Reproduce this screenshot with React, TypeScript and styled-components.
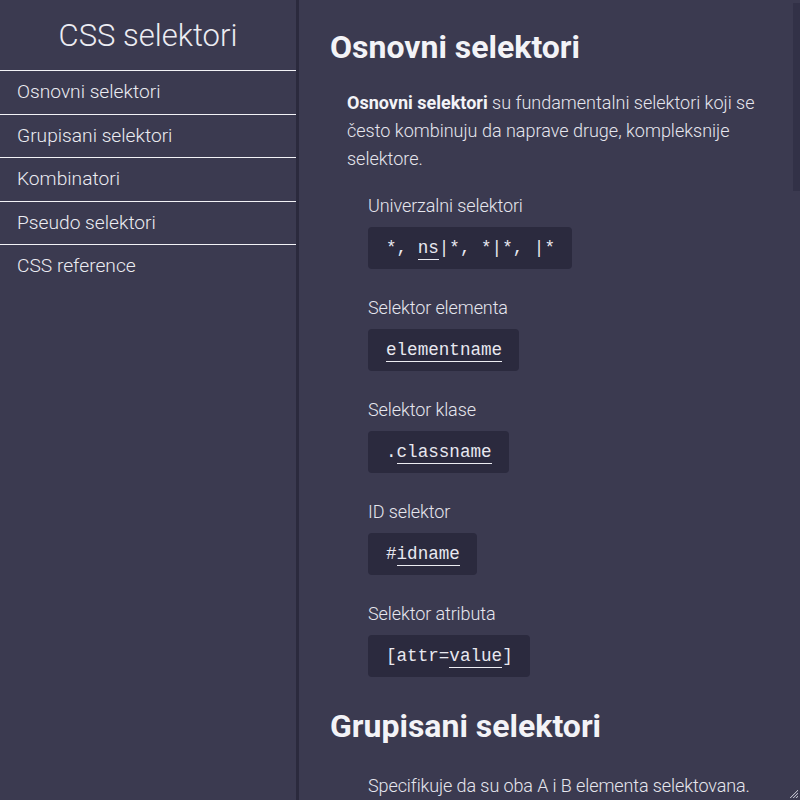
import React from "react";
import styled, { createGlobalStyle } from "styled-components";

const Global = createGlobalStyle`
  html, body { margin: 0; padding: 0; background: #3b3a50; }
  body { font-family: Roboto, "Liberation Sans", sans-serif; color: #e6e6ee; }
  * { box-sizing: border-box; }
`;

const Layout = styled.div`
  display: flex;
  height: 800px;
  width: 800px;
  background: #3b3a50;
`;

const Sidebar = styled.aside`
  width: 296px;
  flex: none;
  display: flex;
  flex-direction: column;
`;

const SiteTitle = styled.h1`
  margin: 0;
  padding: 17px 0 16px;
  text-align: center;
  font-weight: 300;
  font-size: 31px;
  line-height: 37px;
  color: #ececf2;
`;

const NavList = styled.nav`
  display: flex;
  flex-direction: column;
`;

const NavItem = styled.a`
  display: block;
  border-top: 1px solid #f2f2f6;
  height: 43.5px;
  padding: 8px 17px 0;
  font-size: 19.2px;
  font-weight: 300;
  line-height: 26px;
  color: #ececf2;
  text-decoration: none;
`;

const Pane = styled.div`
  position: relative;
  flex: 1;
  height: 800px;
  border-left: 3px solid #2b2a3d;
`;

const Main = styled.main`
  height: 100%;
  overflow-y: auto;
  padding: 0 0 0 31px;
  scrollbar-width: none;
  &::-webkit-scrollbar { display: none; }
`;

const ScrollThumb = styled.div`
  position: absolute;
  top: 3px;
  right: 0;
  width: 7px;
  height: 188px;
  background: #323147;
  pointer-events: none;
`;

const Grip = styled.svg`
  position: absolute;
  right: 1px;
  bottom: 1px;
  width: 12px;
  height: 12px;
  pointer-events: none;
`;

const Section = styled.section`
  padding-bottom: 2px;
`;

const Heading = styled.h2`
  margin: 0;
  padding-top: 27px;
  font-size: 32px;
  font-weight: 700;
  line-height: 40px;
  color: #f3f3f7;
`;

const Lead = styled.p`
  margin: 22px 0 0 17px;
  max-width: 420px;
  font-size: 18px;
  line-height: 28px;
  font-weight: 300;
  color: #e6e6ee;
  & strong { font-weight: 700; color: #f3f3f7; }
`;

const Entry = styled.div<{ $gap?: number }>`
  margin: 0 0 0 38px;
  padding-top: ${(p) => p.$gap ?? 25}px;
`;

const Label = styled.div`
  font-size: 18px;
  font-weight: 300;
  line-height: 28px;
  letter-spacing: -0.1px;
  color: #e6e6ee;
`;

const Code = styled.code`
  display: inline-block;
  margin-top: 7px;
  padding: 0 17px 0 18px;
  height: 42px;
  line-height: 42px;
  background: #2b2a3e;
  border-radius: 4px;
  font-family: "Liberation Mono", "Courier New", monospace;
  font-size: 17.6px;
  color: #e8e8f0;
  white-space: pre;
`;

const Term = styled.abbr`
  text-decoration: none;
  border-bottom: 1px solid #ececf2;
  padding-bottom: 1px;
`;

const Text = styled.p`
  margin: 0;
  font-size: 18px;
  font-weight: 300;
  line-height: 28px;
  color: #e6e6ee;
`;

type Item = { label: string; code: React.ReactNode };

const basic: Item[] = [
  { label: "Univerzalni selektori", code: <>*, <Term>ns</Term>|*, *|*, |*</> },
  { label: "Selektor elementa", code: <Term>elementname</Term> },
  { label: "Selektor klase", code: <>.<Term>classname</Term></> },
  { label: "ID selektor", code: <>#<Term>idname</Term></> },
  { label: "Selektor atributa", code: <>[attr=<Term>value</Term>]</> },
];

const grouped: Item[] = [
  { label: "Specifikuje da su oba A i B elementa selektovana.", code: <>A, B</> },
];

const combinators: Item[] = [
  { label: "Potomak", code: <>A B</> },
  { label: "Direktni potomak", code: <>A &gt; B</> },
  { label: "Opšti sledbenik", code: <>A ~ B</> },
  { label: "Susedni sledbenik", code: <>A + B</> },
  { label: "Kolona", code: <>A || B</> },
];

const pseudo: Item[] = [
  { label: "Pseudo klase", code: <>a:<Term>visited</Term></> },
  { label: "Pseudo elementi", code: <>p::<Term>first-line</Term></> },
  { label: "Hover stanje", code: <>a:<Term>hover</Term></> },
  { label: "Prvo dete", code: <>li:<Term>first-child</Term></> },
  { label: "Negacija", code: <>:<Term>not</Term>(.x)</> },
];

const Entries = ({ items, first }: { items: Item[]; first: number }) => (
  <>
    {items.map((it, i) => (
      <Entry key={it.label} $gap={i === 0 ? first : undefined}>
        <Label>{it.label}</Label>
        <Code>{it.code}</Code>
      </Entry>
    ))}
  </>
);

export default function App() {
  return (
    <>
      <Global />
      <Layout>
        <Sidebar>
          <SiteTitle>CSS selektori</SiteTitle>
          <NavList>
            <NavItem href="#osnovni">Osnovni selektori</NavItem>
            <NavItem href="#grupisani">Grupisani selektori</NavItem>
            <NavItem href="#kombinatori">Kombinatori</NavItem>
            <NavItem href="#pseudo">Pseudo selektori</NavItem>
            <NavItem href="#reference">CSS reference</NavItem>
          </NavList>
        </Sidebar>
        <Pane>
          <Main>
            <Section id="osnovni">
              <Heading>Osnovni selektori</Heading>
              <Lead>
                <strong>Osnovni selektori</strong> su fundamentalni selektori koji se
                često kombinuju da naprave druge, kompleksnije selektore.
              </Lead>
              <Entries items={basic} first={19} />
            </Section>
            <Section id="grupisani">
              <Heading>Grupisani selektori</Heading>
              <Entries items={grouped} first={26} />
            </Section>
            <Section id="kombinatori">
              <Heading>Kombinatori</Heading>
              <Lead>Kombinatori povezuju više selektora u jedan.</Lead>
              <Entries items={combinators} first={19} />
            </Section>
            <Section id="pseudo">
              <Heading>Pseudo selektori</Heading>
              <Lead>Pseudo selektori biraju elemente prema stanju ili delu.</Lead>
              <Entries items={pseudo} first={19} />
            </Section>
            <Section id="reference">
              <Heading>CSS reference</Heading>
              <Lead>Selektori su definisani u specifikaciji CSS Selectors Level 4.</Lead>
              <Entries items={basic} first={19} />
              <Entries items={combinators} first={25} />
              <Entries items={pseudo} first={25} />
              <Entry><Text>Kraj.</Text></Entry>
            </Section>
          </Main>
          <ScrollThumb />
          <Grip viewBox="0 0 12 12">
            <path d="M11 3 L3 11 M11 6 L6 11 M11 9 L9 11" stroke="#b8b8c4" strokeWidth="1" />
            <path d="M11 4 L4 11 M11 7 L7 11 M11 10 L10 11" stroke="#5a5970" strokeWidth="1" />
          </Grip>
        </Pane>
      </Layout>
    </>
  );
}
